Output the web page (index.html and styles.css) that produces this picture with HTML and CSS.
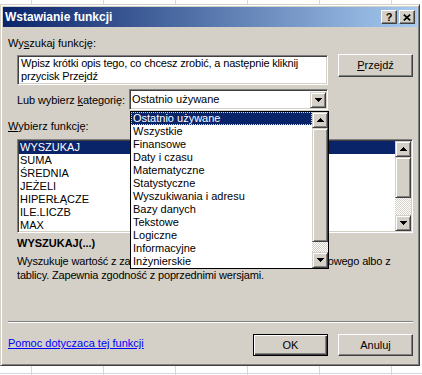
FILE: index.html
```html
<!DOCTYPE html>
<html lang="pl">
<head>
<meta charset="utf-8">
<title>Wstawianie funkcji</title>
<link rel="stylesheet" href="styles.css">
</head>
<body>
<div class="dialog">
  <div class="titlebar">
    <span class="title">Wstawianie funkcji</span>
    <div class="tb-buttons">
      <span class="tb-btn help">?</span>
      <span class="tb-btn close"><svg width="8" height="7" viewBox="0 0 8 7"><path d="M0.8 0.6L7.2 6.4M7.2 0.6L0.8 6.4" stroke="#000" stroke-width="1.7"/></svg></span>
    </div>
  </div>
  <div class="content">
    <div class="label first">Wy<u>s</u>zukaj funkcję:</div>
    <div class="search-row">
      <div class="field search">Wpisz krótki opis tego, co chcesz zrobić, a następnie kliknij<br>przycisk Przejdź</div>
      <div class="btn go"><span><u>P</u>rzejdź</span></div>
    </div>
    <div class="cat-row">
      <div class="cat-label">Lub wybierz <u>k</u>ategorię:</div>
      <div class="field combo">
        <span class="combo-text">Ostatnio używane</span>
        <span class="sb-btn combo-arrow"><svg width="7" height="4" viewBox="0 0 7 4"><path d="M0 0h7v1h-1v1h-1v1h-1v1h-1v-1h-1v-1h-1v-1h-1z" fill="#000"/></svg></span>
        <div class="dropdown">
          <div class="dd-items">
            <div class="dd-item sel">Ostatnio używane</div>
            <div class="dd-item">Wszystkie</div>
            <div class="dd-item">Finansowe</div>
            <div class="dd-item">Daty i czasu</div>
            <div class="dd-item">Matematyczne</div>
            <div class="dd-item">Statystyczne</div>
            <div class="dd-item">Wyszukiwania i adresu</div>
            <div class="dd-item">Bazy danych</div>
            <div class="dd-item">Tekstowe</div>
            <div class="dd-item">Logiczne</div>
            <div class="dd-item">Informacyjne</div>
            <div class="dd-item">Inżynierskie</div>
          </div>
          <div class="scrollbar dd-sb">
            <span class="sb-btn"><svg width="7" height="4" viewBox="0 0 7 4"><path d="M3 0h1v1h1v1h1v1h1v1H0V3h1V2h1V1h1z" fill="#000"/></svg></span>
            <span class="sb-thumb dd-thumb"></span>
            <span class="sb-track"></span>
            <span class="sb-btn"><svg width="7" height="4" viewBox="0 0 7 4"><path d="M0 0h7v1h-1v1h-1v1h-1v1h-1v-1h-1v-1h-1v-1h-1z" fill="#000"/></svg></span>
          </div>
        </div>
      </div>
    </div>
    <div class="label fn-label"><u>W</u>ybierz funkcję:</div>
    <div class="field listbox">
      <div class="lb-items">
        <div class="lb-item sel">WYSZUKAJ</div>
        <div class="lb-item">SUMA</div>
        <div class="lb-item">ŚREDNIA</div>
        <div class="lb-item">JEŻELI</div>
        <div class="lb-item">HIPERŁĄCZE</div>
        <div class="lb-item">ILE.LICZB</div>
        <div class="lb-item">MAX</div>
      </div>
      <div class="scrollbar lb-sb">
        <span class="sb-btn"><svg width="7" height="4" viewBox="0 0 7 4"><path d="M3 0h1v1h1v1h1v1h1v1H0V3h1V2h1V1h1z" fill="#000"/></svg></span>
        <span class="sb-thumb lb-thumb"></span>
        <span class="sb-track lb-track"></span>
        <span class="sb-btn"><svg width="7" height="4" viewBox="0 0 7 4"><path d="M0 0h7v1h-1v1h-1v1h-1v1h-1v-1h-1v-1h-1v-1h-1z" fill="#000"/></svg></span>
      </div>
    </div>
    <div class="fn-name">WYSZUKAJ(...)</div>
    <div class="desc">Wyszukuje wartość z zakresu jednowierszowego lub jednokolumnowego albo z<br>tablicy. Zapewnia zgodność z poprzednimi wersjami.</div>
    <div class="sep"></div>
    <div class="bottom-row">
      <a class="help-link" href="#">Pomoc dotyczaca tej funkcji</a>
      <div class="btn ok default"><span>OK</span></div>
      <div class="btn cancel"><span>Anuluj</span></div>
    </div>
  </div>
</div>
</body>
</html>
```

FILE: styles.css
```css
* { box-sizing: border-box; }
html, body { margin: 0; padding: 0; }
body {
  width: 422px;
  height: 375px;
  overflow: hidden;
  position: relative;
  background-color: #fff;
  background-image: linear-gradient(#d0d7e5, #d0d7e5), linear-gradient(to right, #d0d7e5 1px, transparent 1px);
  background-repeat: no-repeat, repeat-x;
  background-position: 0 373px, 31px 0;
  background-size: 100% 1px, 72px 100%;
  font-family: "Liberation Sans", Arial, sans-serif;
  font-size: 11px;
  line-height: 13px;
  color: #000;
}

.dialog {
  position: absolute;
  left: 0;
  top: 4px;
  width: 420px;
  height: 362px;
  background: #d4d0c8;
  border: 1px solid;
  border-color: #d4d0c8 #404040 #404040 #d4d0c8;
  box-shadow: inset 1px 1px #fff, inset -1px -1px #808080;
  padding: 2px;
}

.titlebar {
  height: 20px;
  background: linear-gradient(to right, #0a246a, #a6caf0);
  display: flex;
  align-items: center;
  padding: 0 2px 0 2px;
}
.title {
  flex: 1;
  color: #fff;
  font-weight: bold;
  font-size: 12px;
  line-height: 20px;
}
.tb-buttons { display: flex; gap: 2px; }
.tb-btn {
  width: 16px;
  height: 14px;
  background: #d4d0c8;
  border: 1px solid;
  border-color: #fff #404040 #404040 #fff;
  box-shadow: inset -1px -1px #808080;
  display: flex;
  align-items: center;
  justify-content: center;
  font-weight: bold;
  font-size: 11px;
  line-height: 12px;
}

.content { padding: 10px 4px 0 5px; }

.label { height: 13px; white-space: nowrap; }

.field {
  background: #fff;
  border: 1px solid;
  border-color: #808080 #fff #fff #808080;
  box-shadow: inset 1px 1px #404040, inset -1px -1px #d4d0c8;
  padding: 1px;
}

.btn {
  background: #d4d0c8;
  border: 1px solid;
  border-color: #fff #404040 #404040 #fff;
  box-shadow: inset -1px -1px #808080;
  display: flex;
  align-items: center;
  justify-content: center;
  width: 75px;
  height: 23px;
}
.btn.default {
  border-color: #000;
  box-shadow: inset 1px 1px #fff, inset -1px -1px #404040, inset -2px -2px #808080;
}

.search-row {
  display: flex;
  align-items: flex-start;
  margin-top: 4px;
}
.search {
  margin-top: 1px;
  margin-left: 9px;
  width: 311px;
  height: 30px;
  padding: 1px 3px;
  white-space: nowrap;
  letter-spacing: -0.17px;
}
.go { margin-left: 10px; }

.cat-row {
  display: flex;
  margin-top: 4px;
  height: 21px;
}
.cat-label {
  margin-left: 9px;
  width: 112px;
  padding-top: 5px;
  white-space: nowrap;
  letter-spacing: -0.1px;
}
.combo {
  position: relative;
  width: 199px;
  height: 21px;
  display: flex;
  align-items: center;
  padding: 1px 1px 1px 2px;
}
.combo-text { flex: 1; white-space: nowrap; }
.combo-arrow { width: 16px; height: 17px; }

.sb-btn {
  display: flex;
  align-items: center;
  justify-content: center;
  background: #d4d0c8;
  border: 1px solid;
  border-color: #d4d0c8 #404040 #404040 #d4d0c8;
  box-shadow: inset 1px 1px #fff, inset -1px -1px #808080;
  width: 16px;
  height: 16px;
  flex: none;
}
.sb-thumb {
  display: block;
  background: #d4d0c8;
  border: 1px solid;
  border-color: #d4d0c8 #404040 #404040 #d4d0c8;
  box-shadow: inset 1px 1px #fff, inset -1px -1px #808080;
  flex: none;
}
.sb-track {
  display: block;
  flex: 1;
  background: repeating-conic-gradient(#d4d0c8 0 25%, #fff 0 50%) 0 0 / 2px 2px;
}
.scrollbar {
  width: 16px;
  display: flex;
  flex-direction: column;
  flex: none;
}

.dropdown {
  position: absolute;
  left: 0;
  top: 21px;
  width: 199px;
  height: 158px;
  background: #fff;
  border: 1px solid #000;
  display: flex;
  z-index: 10;
}
.dd-items { flex: 1; }
.dd-item {
  height: 13px;
  padding-left: 2px;
  white-space: nowrap;
  line-height: 13px;
}
.dd-item.sel {
  background: #0a246a;
  color: #fff;
  outline: 1px dotted #e8dc8c;
  outline-offset: -1px;
}
.dd-thumb { height: 114px; }

.fn-label { margin-top: 10px; }

.listbox {
  margin-top: 6px;
  margin-left: 9px;
  width: 396px;
  height: 94px;
  display: flex;
}
.lb-items { flex: 1; }
.lb-item {
  height: 13px;
  padding-left: 1px;
  white-space: nowrap;
}
.lb-item.sel { background: #0a246a; color: #fff; }
.lb-thumb { height: 41px; }

.fn-name {
  margin-top: 4px;
  margin-left: 9px;
  font-weight: bold;
  height: 13px;
}
.desc {
  margin-top: 4px;
  margin-left: 9px;
  line-height: 14px;
  white-space: nowrap;
  letter-spacing: -0.17px;
}
.sep {
  margin-top: 39px;
  height: 2px;
  border-top: 1px solid #808080;
  border-bottom: 1px solid #fff;
}
.bottom-row {
  display: flex;
  align-items: flex-start;
  margin-top: 11px;
}
.help-link {
  margin-top: 3px;
  color: #0000ff;
  text-decoration: underline;
  flex: 1;
}
.ok, .cancel { height: 22px; }
.cancel { margin-left: 10px; }
```
